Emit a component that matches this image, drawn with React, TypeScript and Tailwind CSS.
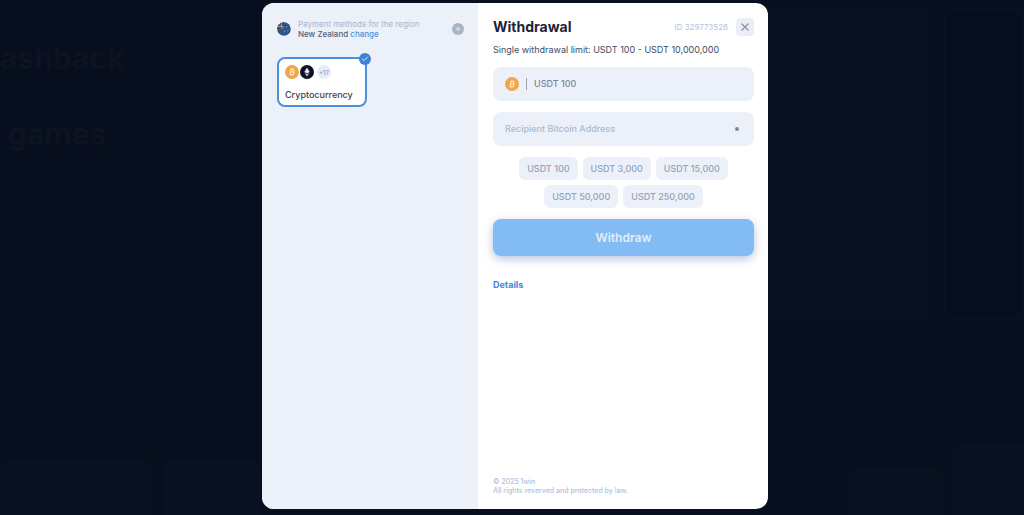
import { useState } from "react";
import { Check, X } from "lucide-react";

const amounts = ["100", "3,000", "15,000", "50,000", "250,000"];

function BitcoinIcon() {
  return (
    <svg viewBox="0 0 14 14" className="size-3.5 shrink-0" aria-hidden="true">
      <circle cx="7" cy="7" r="7" fill="#f2a54a" />
      <g
        transform="rotate(12 7 7)"
        fill="none"
        stroke="#fdebd3"
        strokeWidth="1.1"
      >
        <path d="M5.6 4.4h1.9a1.2 1.2 0 0 1 0 2.5H5.6zM5.6 6.9h2.2a1.3 1.3 0 0 1 0 2.7H5.6z" />
        <path d="M6.2 3.3v1M7.5 3.3v1M6.2 9.7v1M7.5 9.7v1" strokeWidth="0.8" />
      </g>
    </svg>
  );
}

function EthereumIcon() {
  return (
    <svg viewBox="0 0 14 14" className="size-3.5 shrink-0" aria-hidden="true">
      <circle cx="7" cy="7" r="7" fill="#0d1226" />
      <path d="M7 2.4 9.7 7 7 8.6 4.3 7z" fill="#e4e7ee" />
      <path d="M4.3 7.7 7 9.3l2.7-1.6L7 11.6z" fill="#c3c8d4" />
    </svg>
  );
}

function FlagIcon() {
  return (
    <svg viewBox="0 0 14 14" className="size-3.5 shrink-0" aria-hidden="true">
      <circle cx="7" cy="7" r="6.8" fill="#2c558e" />
      <path
        d="M1.2 3.6A6.8 6.8 0 0 1 7 .2V7H.2a6.8 6.8 0 0 1 1-3.4z"
        fill="#3c4560"
      />
      <path d="M4.6 1v6M1 4.6h6" stroke="#b99872" strokeWidth="1" />
      <path d="M2 2.4 7 7" stroke="#8a8fa5" strokeWidth="0.6" />
      <circle cx="9.6" cy="5" r="0.8" fill="#5f9bd6" />
      <circle cx="7.6" cy="9.6" r="0.8" fill="#5f9bd6" />
      <circle cx="10.8" cy="8.6" r="0.7" fill="#5f9bd6" />
    </svg>
  );
}

// dimmed casino page behind the dialog
function Backdrop() {
  return (
    <div
      aria-hidden="true"
      className="absolute inset-0 flex justify-between overflow-hidden text-[#0c1322]"
    >
      <div className="flex flex-col justify-between pt-10">
        <div className="flex flex-col gap-10 text-3xl font-bold">
          <p>ashback</p>
          <p className="pl-2">games</p>
        </div>
        <div className="flex gap-3">
          <div className="h-14 w-38 rounded-t-xl bg-[#091120]" />
          <div className="h-14 w-24 rounded-t-xl bg-[#091120]" />
        </div>
      </div>
      <div className="flex w-64 flex-col justify-between pt-2">
        <div className="flex gap-4">
          <div className="h-78 w-40 bg-[#091120]" />
          <div className="h-78 flex-1 rounded-l-lg border border-[#0b1322]" />
        </div>
        <div className="flex items-end gap-2 pl-20">
          <div className="h-12 w-24 rounded-t-xl bg-[#091120]" />
          <div className="h-18 flex-1 rounded-tl-xl bg-[#091120]" />
        </div>
      </div>
    </div>
  );
}

function PaymentMethods() {
  return (
    <aside className="w-54 bg-[#ecf0f8] py-4 pr-3.5 pl-[15px]">
      <div className="flex items-center gap-[7px]">
        <FlagIcon />
        <div className="flex-1 text-[8px] leading-[10px]">
          <p className="text-[#a3b5cc]">Payment methods for the region</p>
          <p className="font-medium text-[#56617a]">
            New Zealand{" "}
            <a href="#region" className="text-[#4a94dc]">
              change
            </a>
          </p>
        </div>
        <button
          type="button"
          aria-label="More options"
          className="flex size-3 items-center justify-center rounded-full bg-[#a9b4c6]"
        >
          <span className="size-1 rounded-full bg-[#cdd6e3]" />
        </button>
      </div>

      <button
        type="button"
        aria-pressed="true"
        className="relative mt-[18px] flex h-[50px] w-[90px] flex-col items-start justify-between rounded-lg border-2 border-[#4a90dd] bg-white px-1.5 pt-1.5 pb-[5px]"
      >
        <span className="flex items-center gap-px">
          <BitcoinIcon />
          <EthereumIcon />
          <span className="ml-0.5 flex size-3.5 items-center justify-center rounded-full bg-[#e6edf6] text-[6px] font-medium text-[#8799b5]">
            +17
          </span>
        </span>
        <span className="text-[9px] leading-[11px] font-medium text-[#3a4256]">
          Cryptocurrency
        </span>
        <span className="absolute -top-1.5 -right-1.5 flex size-3 items-center justify-center rounded-full bg-[#3f83d6] text-white">
          <Check className="size-2" strokeWidth={2.5} />
        </span>
      </button>
    </aside>
  );
}

function WithdrawalForm() {
  const [amount, setAmount] = useState("USDT 100");
  const [address, setAddress] = useState("");

  return (
    <section className="flex flex-1 flex-col pt-[15px] pr-3.5 pb-3.5 pl-[15px]">
      <header className="flex items-center justify-between">
        <h1 className="text-[14px] leading-[18px] font-bold text-[#1d2438]">
          Withdrawal
        </h1>
        <div className="flex items-center gap-2">
          <span className="text-[8px] text-[#b4c4da]">ID 329773528</span>
          <button
            type="button"
            aria-label="Close"
            className="flex size-[18px] items-center justify-center rounded bg-[#e9eef7] text-[#8f99aa]"
          >
            <X className="size-3" strokeWidth={3} />
          </button>
        </div>
      </header>

      <p className="mt-2 text-[9px] leading-[11px] text-[#414b61]">
        Single withdrawal limit: USDT 100 - USDT 10,000,000
      </p>

      <form
        className="mt-3 flex flex-col"
        onSubmit={(e) => e.preventDefault()}
      >
        <label className="flex h-[34px] items-center rounded-lg bg-[#ecf0f8] px-3">
          <BitcoinIcon />
          <span className="mx-[7px] h-3 w-px bg-[#98a5b8]" />
          <input
            aria-label="Amount"
            value={amount}
            onChange={(e) => setAmount(e.target.value)}
            className="min-w-0 flex-1 bg-transparent text-[9px] font-medium text-[#7a879b] outline-none"
          />
        </label>

        <label className="mt-[11px] flex h-[34px] items-center rounded-lg bg-[#ecf0f8] px-3">
          <input
            aria-label="Recipient Bitcoin Address"
            placeholder="Recipient Bitcoin Address"
            value={address}
            onChange={(e) => setAddress(e.target.value)}
            className="min-w-0 flex-1 bg-transparent text-[9px] font-medium text-[#7a879b] outline-none placeholder:text-[#a9bacf]"
          />
          <span className="mr-[3px] size-1 rounded-full bg-[#7d8797]" />
        </label>

        <div className="mt-[11px] flex flex-wrap justify-center gap-[5px] px-4">
          {amounts.map((value) => (
            <button
              key={value}
              type="button"
              onClick={() => setAmount(`USDT ${value}`)}
              className="h-[23px] rounded-md bg-[#ecf0f8] px-2 text-[9px] font-medium text-[#93a4bb]"
            >
              USDT {value}
            </button>
          ))}
        </div>

        <button
          type="submit"
          className="mt-[11px] h-[37px] rounded-lg bg-[#83bcf5] text-[12px] font-semibold text-[#e6ecf5] shadow-[0_3px_10px_rgba(90,130,185,0.45)]"
        >
          Withdraw
        </button>
      </form>

      <a
        href="#details"
        className="mt-[23px] self-start text-[9px] leading-3 font-bold text-[#4089da]"
      >
        Details
      </a>

      <footer className="mt-auto text-[7px] leading-[9px] font-medium text-[#afc2da]">
        <p>© 2025 1win</p>
        <p>All rights reserved and protected by law.</p>
      </footer>
    </section>
  );
}

export default function App() {
  return (
    <div className="relative flex min-h-screen justify-center bg-[#070e1d] px-4 pt-[3px] pb-1.5 font-[Inter,sans-serif]">
      <Backdrop />
      <main
        role="dialog"
        aria-label="Withdrawal"
        className="relative ml-1.5 flex w-full max-w-[506px] overflow-hidden rounded-xl bg-white"
      >
        <PaymentMethods />
        <WithdrawalForm />
      </main>
    </div>
  );
}
